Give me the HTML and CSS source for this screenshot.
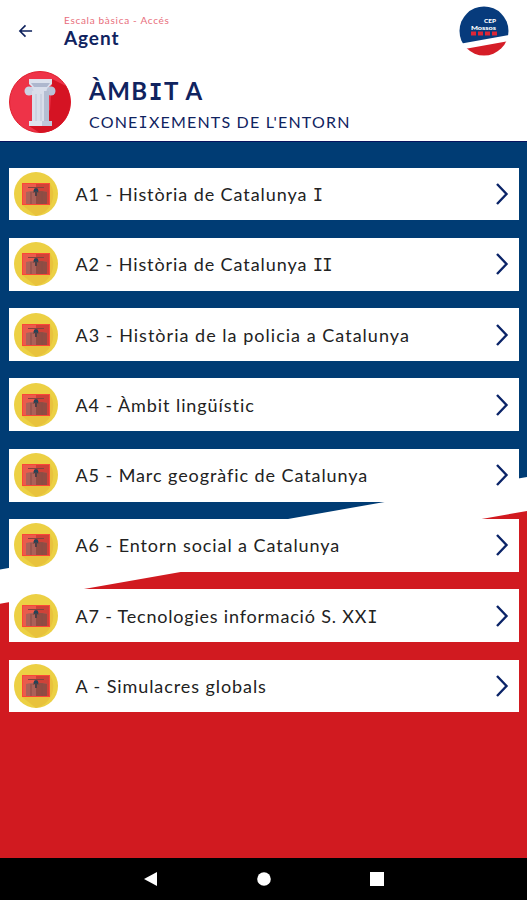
FILE: index.html
```html
<!DOCTYPE html>
<html lang="ca">
<head>
    <meta charset="UTF-8">
    <meta name="viewport" content="width=device-width, initial-scale=1.0">
    <title>Agent</title>
    <link rel="stylesheet" href="styles.css">
</head>
<body>
    <!-- Shared icons -->
    <svg class="defs" width="0" height="0">
        <symbol id="unit" viewBox="0 0 44 44">
            <circle cx="22" cy="22" r="22" fill="#ecd044"/>
            <path d="M36 11 A22 22 0 0 1 22 44 L8 33z" fill="#e8c23c"/>
            <rect x="8" y="11" width="28" height="22" fill="#fb4638"/>
            <path d="M9 12h13v20H9z" fill="#e95c4c"/>
            <path d="M22 12h13v20H22z" fill="#cf4238"/>
            <path d="M12 20l5-1h11l5 1v12H12z" fill="#ac6159"/>
            <path d="M22 19h6l5 1v12H22z" fill="#914c43"/>
            <path d="M17 20v12M28 20v12" stroke="#884c47"/>
            <path d="M14 15.500h16M19 21l3-6 3 6" fill="none" stroke="#84443e"/>
            <circle cx="22" cy="18.500" r="2.300" fill="#254458"/>
            <path d="M22 19v5" stroke="#4e3f43" stroke-width="2"/>
        </symbol>
        <symbol id="chevron" viewBox="0 0 14 24">
            <path d="M2 2l9.500 10L2 22" fill="none" stroke="#0b2468" stroke-width="2.400"/>
        </symbol>
    </svg>

    <header class="header">
        <div class="topbar">
            <svg class="back" viewBox="0 0 16 14"><path d="M15 7H2M8 1L2 7l6 6" fill="none" stroke="#0d205c" stroke-width="1.700"/></svg>
            <div class="topbar-text">
                <p class="course">Escala bàsica - Accés</p>
                <h1 class="role">Agent</h1>
            </div>
            <svg class="logo" viewBox="0 0 50 50">
                <clipPath id="round"><circle cx="25" cy="25" r="24.500"/></clipPath>
                <g clip-path="url(#round)">
                    <rect width="50" height="50" fill="#fff"/>
                    <path d="M0 0h50v29L0 38z" fill="#073b7c"/>
                    <path d="M0 44l50-9v15H0z" fill="#d51d27"/>
                </g>
                <text x="25" y="17" class="logo-top" textLength="12" lengthAdjust="spacingAndGlyphs">CEP</text>
                <text x="12" y="24" class="logo-name" textLength="25" lengthAdjust="spacingAndGlyphs">Mossos</text>
                <path d="M12 27.500h26" stroke="#dc2737" stroke-width="4" stroke-dasharray="5 2"/>
            </svg>
        </div>
        <div class="section">
            <svg class="section-icon" viewBox="0 0 62 62">
                <circle cx="31" cy="31" r="30.500" fill="#ee3348" stroke="#e0202f"/>
                <path d="M43 8l14 7A31 31 0 0 1 31 62L20 55l21-16z" fill="#d51323"/>
                <path d="M20 8h23v5l-4 4H24l-4-4z" fill="#dce1ed"/>
                <path d="M22 12h19l-3 4H25z" fill="#aeb7ce"/>
                <rect x="17" y="16" width="29" height="8" rx="4" fill="#d9deeb"/>
                <circle cx="20" cy="20" r="4.500" fill="#ccd2e3"/>
                <circle cx="42" cy="20" r="4.500" fill="#b9c2d6"/>
                <path d="M23 20h17v31H23z" fill="#d9deea"/>
                <path d="M35 20h5v31h-5z" fill="#b4bed2"/>
                <path d="M27 23v28M32 23v28" stroke="#bec6d8"/>
                <path d="M20 50h23v5H20z" fill="#dfe3ee"/>
                <path d="M33 50h10v5H33z" fill="#c0c8da"/>
            </svg>
            <div>
                <h2 class="section-title">ÀMB<span class="slab">I</span>T A</h2>
                <p class="section-name">CONE<span class="slab">I</span>XEMENTS DE L'ENTORN</p>
            </div>
        </div>
    </header>

    <main class="content">
        <svg class="flag" viewBox="0 0 527 717" preserveAspectRatio="none">
            <rect width="527" height="717" fill="#003c74"/>
            <path d="M0 428L527 335.500V717H0z" fill="#fff"/>
            <path d="M0 462.500L527 369.500V717H0z" fill="#d11a20"/>
        </svg>
        <ul class="units">
            <li class="unit"><svg class="unit-icon"><use href="#unit"/></svg><span class="unit-name">A1 - Història de Catalunya <span class="slab">I</span></span><svg class="chevron"><use href="#chevron"/></svg></li>
            <li class="unit"><svg class="unit-icon"><use href="#unit"/></svg><span class="unit-name">A2 - Història de Catalunya <span class="slab">II</span></span><svg class="chevron"><use href="#chevron"/></svg></li>
            <li class="unit"><svg class="unit-icon"><use href="#unit"/></svg><span class="unit-name wide">A3 - Història de la policia a Catalunya</span><svg class="chevron"><use href="#chevron"/></svg></li>
            <li class="unit"><svg class="unit-icon"><use href="#unit"/></svg><span class="unit-name">A4 - Àmbit lingüístic</span><svg class="chevron"><use href="#chevron"/></svg></li>
            <li class="unit"><svg class="unit-icon"><use href="#unit"/></svg><span class="unit-name">A5 - Marc geogràfic de Catalunya</span><svg class="chevron"><use href="#chevron"/></svg></li>
            <li class="unit"><svg class="unit-icon"><use href="#unit"/></svg><span class="unit-name">A6 - Entorn social a Catalunya</span><svg class="chevron"><use href="#chevron"/></svg></li>
            <li class="unit"><svg class="unit-icon"><use href="#unit"/></svg><span class="unit-name tight">A7 - Tecnologies informació S. XX<span class="slab">I</span></span><svg class="chevron"><use href="#chevron"/></svg></li>
            <li class="unit"><svg class="unit-icon"><use href="#unit"/></svg><span class="unit-name">A - Simulacres globals</span><svg class="chevron"><use href="#chevron"/></svg></li>
        </ul>
    </main>

    <nav class="navbar">
        <svg viewBox="0 0 14 14"><path d="M0 7L13 0v14z" fill="#fff"/></svg>
        <svg viewBox="0 0 14 14"><circle cx="7" cy="7" r="6.800" fill="#fff"/></svg>
        <svg viewBox="0 0 14 14"><rect width="14" height="14" fill="#fff"/></svg>
    </nav>
</body>
</html>
```
FILE: styles.css
```css
* {
    box-sizing: border-box;
}
body {
    margin: 0;
    height: 900px;
    display: flex;
    flex-direction: column;
    overflow: hidden;
    font-family: Lato, sans-serif;
    background-color: white;
}
h1, h2, p, ul {
    margin: 0;
    padding: 0;
}
svg {
    display: block;
    flex: none;
}
.defs {
    position: absolute;
}
.header {
    height: 141px;
    color: #10235f;
}
.topbar {
    display: flex;
    height: 71px;
    padding: 6px 18px 0 18px;
}
.back {
    width: 15px;
    height: 14px;
    margin-top: 18px;
}
.topbar-text {
    flex: 1;
    padding: 7px 0 0 31px;
}
.course {
    font-size: 10px;
    line-height: 14px;
    letter-spacing: 0.7px;
    color: #e86d7b;
}
.role {
    font-size: 19px;
    line-height: 22px;
    letter-spacing: 0.9px;
}
.logo {
    width: 50px;
    height: 50px;
}
.logo-top, .logo-name {
    font-size: 5.6px;
    font-weight: 900;
    fill: white;
}
.section {
    display: flex;
    padding-left: 9px;
}
.section-icon {
    width: 62px;
    height: 62px;
    margin-right: 18px;
}
.section-title {
    font-size: 24px;
    line-height: 28px;
    padding-top: 6px;
    letter-spacing: 1.5px;
}
.section-name {
    font-size: 16px;
    line-height: 24px;
    padding-top: 5px;
    letter-spacing: 1.2px;
}
.slab {
    font-family: "DejaVu Sans Mono", monospace;
    font-size: 0.95em;
    line-height: 1;
}
.content {
    position: relative;
    flex: 1;
    border-top: 1px solid #06145e;
}
.flag {
    position: absolute;
    left: 0;
    top: 0;
    width: 100%;
    height: 100%;
}
.units {
    position: relative;
    display: grid;
    gap: 17.4px;
    padding: 25.6px 8px 0 9px;
    list-style: none;
}
.unit {
    display: flex;
    align-items: center;
    height: 52.9px;
    padding: 0 10px 0 5px;
    background-color: white;
}
.unit-icon {
    width: 44px;
    height: 44px;
}
.unit-name {
    flex: 1;
    padding-left: 17.5px;
    font-size: 18px;
    line-height: 24px;
    letter-spacing: 0.92px;
    color: #222;
    white-space: nowrap;
}
.unit-name.wide {
    letter-spacing: 1.02px;
}
.unit-name.tight {
    letter-spacing: 0.8px;
}
.unit-name .slab {
    letter-spacing: -0.8px;
}
.chevron {
    width: 14px;
    height: 24px;
}
.navbar {
    display: flex;
    justify-content: space-between;
    align-items: center;
    height: 42px;
    padding: 0 143px 0 144px;
    background-color: black;
}
.navbar svg {
    width: 14px;
    height: 14px;
}
```
